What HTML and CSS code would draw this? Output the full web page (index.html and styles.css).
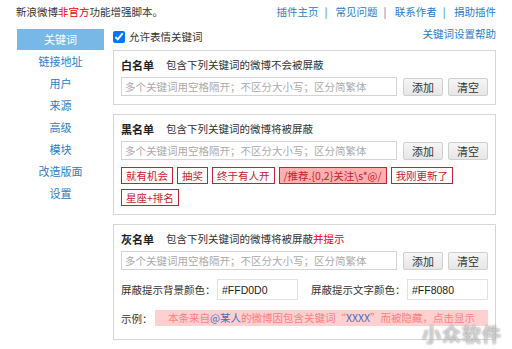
FILE: index.html
```html
<!DOCTYPE html>
<html lang="zh-CN">
<head>
    <meta charset="UTF-8">
    <meta name="viewport" content="width=device-width, initial-scale=1.0">
    <title>关键词设置</title>
    <link rel="stylesheet" href="styles.css">
</head>
<body>
    <div class="page">
        <!-- 顶部说明与链接 -->
        <div class="topbar">
            <div class="intro">新浪微博<span class="red">非官方</span>功能增强脚本。</div>
            <div class="links">
                <a href="#">插件主页</a><span class="sep">|</span>
                <a href="#">常见问题</a><span class="sep">|</span>
                <a href="#">联系作者</a><span class="sep">|</span>
                <a href="#">捐助插件</a>
            </div>
        </div>

        <div class="layout">
            <!-- 左侧菜单 -->
            <ul class="tabs">
                <li class="active">关键词</li>
                <li>链接地址</li>
                <li>用户</li>
                <li>来源</li>
                <li>高级</li>
                <li>模块</li>
                <li>改造版面</li>
                <li>设置</li>
            </ul>

            <div class="content">
                <div class="option-row">
                    <label class="check"><input type="checkbox" checked> 允许表情关键词</label>
                    <a href="#" class="help">关键词设置帮助</a>
                </div>

                <!-- 白名单 -->
                <div class="group">
                    <div class="group-title"><b>白名单</b><span>包含下列关键词的微博不会被屏蔽</span></div>
                    <div class="input-row">
                        <input type="text" placeholder="多个关键词用空格隔开；不区分大小写；区分简繁体">
                        <button>添加</button>
                        <button>清空</button>
                    </div>
                </div>

                <!-- 黑名单 -->
                <div class="group">
                    <div class="group-title"><b>黑名单</b><span>包含下列关键词的微博将被屏蔽</span></div>
                    <div class="input-row">
                        <input type="text" placeholder="多个关键词用空格隔开；不区分大小写；区分简繁体">
                        <button>添加</button>
                        <button>清空</button>
                    </div>
                    <div class="tags">
                        <span class="tag">就有机会</span>
                        <span class="tag">抽奖</span>
                        <span class="tag">终于有人开</span>
                        <span class="tag regex">/推荐.{0,2}关注\s*@/</span>
                        <span class="tag">我刚更新了</span>
                        <span class="tag">星座+排名</span>
                    </div>
                </div>

                <!-- 灰名单 -->
                <div class="group">
                    <div class="group-title"><b>灰名单</b><span>包含下列关键词的微博将被屏蔽<em class="red">并提示</em></span></div>
                    <div class="input-row">
                        <input type="text" placeholder="多个关键词用空格隔开；不区分大小写；区分简繁体">
                        <button>添加</button>
                        <button>清空</button>
                    </div>
                    <div class="color-row">
                        <label>屏蔽提示背景颜色：</label>
                        <input type="text" class="color" value="#FFD0D0">
                        <label class="second">屏蔽提示文字颜色：</label>
                        <input type="text" class="color" value="#FF8080">
                    </div>
                    <div class="example-row">
                        <label>示例：</label>
                        <div class="example">本条来自<span class="blue">@某人</span>的微博因包含关键词“<span class="blue">XXXX</span>”而被隐藏，点击显示</div>
                    </div>
                </div>
            </div>
        </div>
        <div class="watermark">小众软件</div>
    </div>
</body>
</html>
```

FILE: styles.css
```css
body {
    margin: 0;
    background: #fff;
    font-family: "Noto Sans CJK SC", "Liberation Sans", sans-serif;
    font-size: 10.5px;
    color: #333;
}
a {
    color: #2a80c8;
    text-decoration: none;
}
.red {
    color: #e00;
    font-style: normal;
}
.blue {
    color: #3a70c0;
}
.page {
    width: 512px;
    height: 349px;
    position: relative;
    overflow: hidden;
}

/* 顶部 */
.topbar {
    display: flex;
    justify-content: space-between;
    height: 16px;
    padding: 4px 16px 0 16px;
    line-height: 16px;
}
.links .sep {
    color: #2a80c8;
    margin: 0 6px;
}

.layout {
    display: flex;
    margin-top: 9px;
    padding-left: 17px;
}

/* 左侧菜单 */
.tabs {
    list-style: none;
    margin: 0;
    padding: 0;
    width: 87px;
    flex-shrink: 0;
}
.tabs li {
    height: 21px;
    line-height: 21px;
    margin-bottom: 1px;
    text-align: center;
    color: #2a80c8;
    font-size: 11px;
}
.tabs li.active {
    background: #78b8e6;
    color: #fff;
}

.content {
    width: 383px;
    margin-left: 9px;
}
.option-row {
    display: flex;
    justify-content: space-between;
    height: 16px;
    line-height: 16px;
    margin: 0 0 5px 0;
}
.check {
    display: flex;
    align-items: center;
    height: 16px;
    color: #333;
}
.check input {
    margin: 0 4px 0 0;
    width: 12px;
    height: 12px;
}
.help {
    height: 16px;
    margin-top: -3px;
}

/* 名单框 */
.group {
    border: 1px solid #d6d6d6;
    padding: 6px 7px 8px 7px;
    margin-bottom: 9px;
}
.group-title {
    display: flex;
    align-items: center;
    height: 16px;
    line-height: 16px;
    color: #333;
}
.group-title b {
    font-size: 11px;
    color: #222;
    margin-right: 12px;
}
.input-row {
    display: flex;
    align-items: center;
    height: 19px;
    margin-top: 4px;
}
.input-row input {
    width: 276px;
    height: 19px;
    box-sizing: border-box;
    border: 1px solid #d4d4d4;
    padding: 0 3px;
    margin: 0;
    font-family: inherit;
    font-size: 10.5px;
}
.input-row input::placeholder {
    color: #aaa;
}
.input-row button {
    width: 40px;
    height: 18px;
    margin-left: 6px;
    padding: 0;
    border: 1px solid #cfcfcf;
    border-radius: 2px;
    background: linear-gradient(#f6f6f6, #e6e6e6);
    font-family: inherit;
    font-size: 11px;
    line-height: 16px;
    color: #333;
}
.input-row button + button {
    margin-left: 5px;
}

/* 关键词标签 */
.tags {
    display: flex;
    flex-wrap: wrap;
    gap: 5px 4px;
    margin-top: 7px;
}
.tag {
    box-sizing: border-box;
    height: 17px;
    border: 1px solid #c8202e;
    color: #c8202e;
    padding: 0 4px;
    line-height: 15px;
    font-size: 10.5px;
}
.tag.regex {
    background: #ffb0b0;
}

/* 颜色设置 */
.color-row {
    display: flex;
    align-items: center;
    height: 21px;
    margin-top: 9px;
}
.color-row label {
    width: 95px;
    color: #333;
}
.color-row label.second {
    margin-left: 13px;
}
.color-row input.color {
    width: 81px;
    height: 21px;
    box-sizing: border-box;
    margin: 0 0 0 1px;
    border: 1px solid #e2e2e2;
    padding: 0 4px;
    font-family: "Liberation Sans", sans-serif;
    font-size: 10.5px;
    color: #222;
}

.example-row {
    display: flex;
    align-items: center;
    height: 16px;
    margin-top: 10px;
    margin-bottom: 5px;
}
.example-row label {
    width: 34px;
    color: #333;
}
.example {
    flex: 1;
    height: 16px;
    line-height: 16px;
    background: #ffd0d0;
    color: #ff8080;
    text-align: center;
}

.watermark {
    position: absolute;
    right: 10px;
    bottom: 2px;
    font-size: 19px;
    font-weight: bold;
    color: rgba(255, 255, 255, 0.55);
    text-shadow: 0 0 2px rgba(90, 90, 90, 0.8);
    letter-spacing: 1px;
}
```
